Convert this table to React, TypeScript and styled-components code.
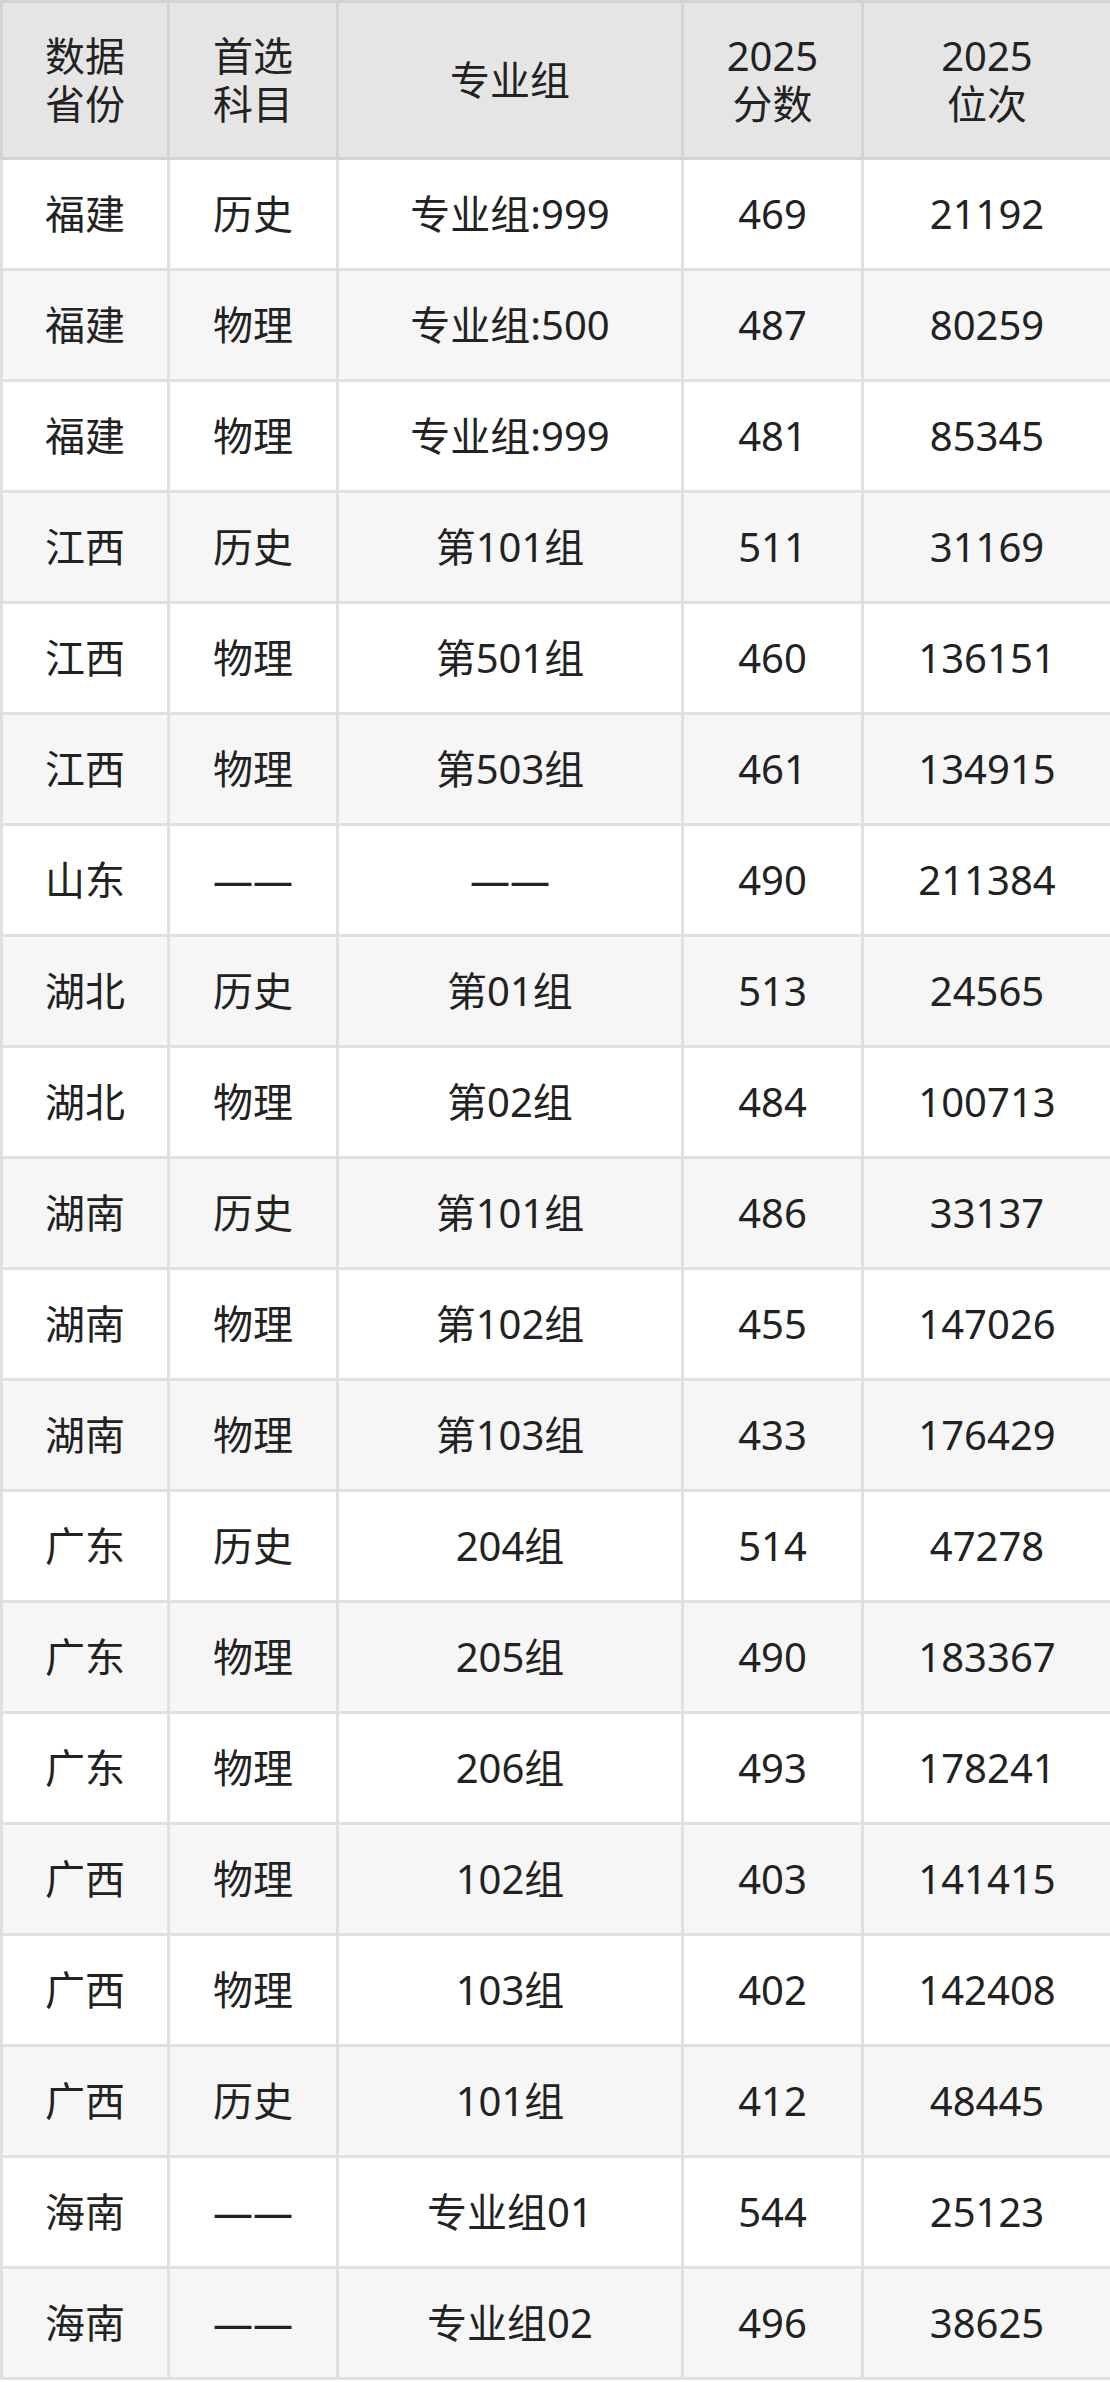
import React from 'react';
import styled, { createGlobalStyle } from 'styled-components';

const Global = createGlobalStyle`
  html, body { margin: 0; padding: 0; background: #fff; }
  body { font-family: "Noto Sans", "Noto Sans CJK SC", sans-serif; color: #222; }
`;

const Table = styled.table`
  width: 1110px;
  table-layout: fixed;
  border-collapse: collapse;
  border: 3px solid #d8d8d8;
  font-size: 40px;
`;

const Col = styled.col<{ $w: number }>`
  width: ${({ $w }) => $w}px;
`;

const Head = styled.th`
  height: 154px;
  background: #e5e5e5;
  border: 3px solid #d4d4d4;
  font-weight: 400;
  line-height: 48px;
  text-align: center;
  vertical-align: middle;
  padding: 0;
`;

const Row = styled.tr<{ $alt?: boolean }>`
  background: ${({ $alt }) => ($alt ? '#f6f6f6' : '#fff')};
`;

const Cell = styled.td`
  height: 108px;
  border: 3px solid #e0e0e0;
  text-align: center;
  vertical-align: middle;
  padding: 0;
  line-height: 48px;
`;

type Item = [string, string, string, number, number];

const widths = [167, 169, 345, 180, 249];

const rows: Item[] = [
  ['福建', '历史', '专业组:999', 469, 21192],
  ['福建', '物理', '专业组:500', 487, 80259],
  ['福建', '物理', '专业组:999', 481, 85345],
  ['江西', '历史', '第101组', 511, 31169],
  ['江西', '物理', '第501组', 460, 136151],
  ['江西', '物理', '第503组', 461, 134915],
  ['山东', '——', '——', 490, 211384],
  ['湖北', '历史', '第01组', 513, 24565],
  ['湖北', '物理', '第02组', 484, 100713],
  ['湖南', '历史', '第101组', 486, 33137],
  ['湖南', '物理', '第102组', 455, 147026],
  ['湖南', '物理', '第103组', 433, 176429],
  ['广东', '历史', '204组', 514, 47278],
  ['广东', '物理', '205组', 490, 183367],
  ['广东', '物理', '206组', 493, 178241],
  ['广西', '物理', '102组', 403, 141415],
  ['广西', '物理', '103组', 402, 142408],
  ['广西', '历史', '101组', 412, 48445],
  ['海南', '——', '专业组01', 544, 25123],
  ['海南', '——', '专业组02', 496, 38625],
];

export default function App() {
  return (
    <>
      <Global />
      <Table>
        <colgroup>
          {widths.map((w, i) => (
            <Col key={i} $w={w} />
          ))}
        </colgroup>
        <thead>
          <tr>
            <Head>数据<br />省份</Head>
            <Head>首选<br />科目</Head>
            <Head>专业组</Head>
            <Head>2025<br />分数</Head>
            <Head>2025<br />位次</Head>
          </tr>
        </thead>
        <tbody>
          {rows.map((r, i) => (
            <Row key={i} $alt={i % 2 === 1}>
              {r.map((v, j) => (
                <Cell key={j}>{v}</Cell>
              ))}
            </Row>
          ))}
        </tbody>
      </Table>
    </>
  );
}
